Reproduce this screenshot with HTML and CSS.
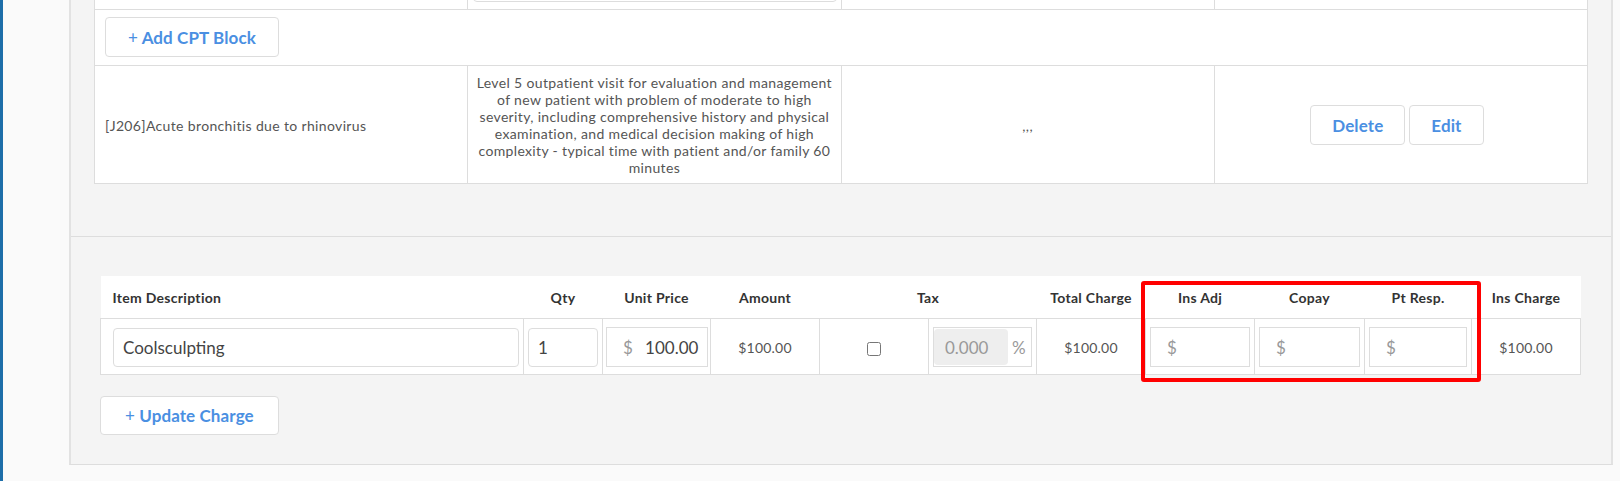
FILE: index.html
```html
<!DOCTYPE html>
<html lang="en">
<head>
    <meta charset="UTF-8">
    <meta name="viewport" content="width=device-width, initial-scale=1.0">
    <title>Superbill Charges</title>
    <link rel="stylesheet" href="styles.css">
</head>
<body>
    <div class="edge"></div>
    <div class="main">
        <div class="panel">
            <div class="section cpt-section">
                <table class="cpt-table">
                    <tr class="stub-row">
                        <td></td>
                        <td><input class="field" type="text"></td>
                        <td></td>
                        <td></td>
                    </tr>
                    <tr>
                        <td colspan="4" class="add-cell">
                            <button class="btn"><span class="plus">+</span> Add CPT Block</button>
                        </td>
                    </tr>
                    <tr class="cpt-row">
                        <td>[J206]Acute bronchitis due to rhinovirus</td>
                        <td class="center">Level 5 outpatient visit for evaluation and management of new patient with problem of moderate to high severity, including comprehensive history and physical examination, and medical decision making of high complexity - typical time with patient and/or family 60 minutes</td>
                        <td class="center">,,,</td>
                        <td class="center action-cell">
                            <div class="actions">
                                <button class="btn">Delete</button>
                                <button class="btn">Edit</button>
                            </div>
                        </td>
                    </tr>
                </table>
            </div>

            <div class="section charge-section">
                <div class="charge-wrap">
                    <table class="charge-table">
                        <colgroup>
                            <col style="width:423px">
                            <col style="width:79px">
                            <col style="width:108px">
                            <col style="width:109px">
                            <col style="width:109px">
                            <col style="width:108px">
                            <col style="width:109px">
                            <col style="width:109px">
                            <col style="width:110px">
                            <col style="width:107px">
                            <col style="width:109px">
                        </colgroup>
                        <thead>
                            <tr>
                                <th class="first">Item Description</th>
                                <th>Qty</th>
                                <th>Unit Price</th>
                                <th>Amount</th>
                                <th colspan="2">Tax</th>
                                <th>Total Charge</th>
                                <th>Ins Adj</th>
                                <th>Copay</th>
                                <th>Pt Resp.</th>
                                <th>Ins Charge</th>
                            </tr>
                        </thead>
                        <tbody>
                            <tr>
                                <td class="first"><input class="field" type="text" value="Coolsculpting"></td>
                                <td><input class="field" type="text" value="1"></td>
                                <td class="tight">
                                    <div class="money">
                                        <span class="cur">$</span>
                                        <input class="money-input" type="text" value="100.00">
                                    </div>
                                </td>
                                <td class="center">$100.00</td>
                                <td class="center"><input class="check" type="checkbox"></td>
                                <td>
                                    <div class="tax">
                                        <input class="tax-input" type="text" value="0.000" disabled>
                                        <span class="pct">%</span>
                                    </div>
                                </td>
                                <td class="center">$100.00</td>
                                <td>
                                    <div class="money">
                                        <span class="cur">$</span>
                                        <input class="money-input" type="text">
                                    </div>
                                </td>
                                <td>
                                    <div class="money">
                                        <span class="cur">$</span>
                                        <input class="money-input" type="text">
                                    </div>
                                </td>
                                <td>
                                    <div class="money">
                                        <span class="cur">$</span>
                                        <input class="money-input" type="text">
                                    </div>
                                </td>
                                <td class="center">$100.00</td>
                            </tr>
                        </tbody>
                    </table>
                    <div class="highlight"></div>
                </div>
                <button class="btn update-btn"><span class="plus">+</span> Update Charge</button>
            </div>
        </div>
    </div>
</body>
</html>
```

FILE: styles.css
```css
html, body {
    height: 100%;
}
body {
    margin: 0;
    display: flex;
    background-color: #fafafa;
    font-family: Lato, "Open Sans", sans-serif;
    color: #555;
    overflow: hidden;
}
.edge {
    flex: none;
    width: 3px;
    background-color: #1d6ea9;
}
.main {
    flex: 1;
    padding-left: 66px;
    padding-right: 8px;
}
.panel {
    margin-top: -60px;
    background-color: #f4f4f4;
    border-left: 2px solid #e2e2e2;
    border-right: 2px solid #e2e2e2;
    border-bottom: 1px solid #dddddd;
}
.section + .section {
    border-top: 1px solid #dddddd;
}

/* CPT block table */
.cpt-section {
    padding: 20px 23px 52px 23px;
}
.cpt-table {
    width: 100%;
    table-layout: fixed;
    border-collapse: collapse;
    background-color: #fff;
    font-size: 14px;
    line-height: 17px;
    letter-spacing: 0.35px;
}
.cpt-table td {
    border: 1px solid #dddddd;
    padding: 8px 10px 7px 10px;
    vertical-align: middle;
}
.cpt-table .stub-row td {
    padding: 5px 4px 7px 5px;
}
.cpt-table .add-cell {
    padding: 7px 10px 8px 10px;
}
.cpt-table td.center {
    text-align: center;
    padding-left: 6px;
    padding-right: 6px;
}
.cpt-table td.action-cell {
    padding-right: 14px;
}
.actions {
    display: flex;
    justify-content: center;
    gap: 4px;
}

.btn {
    height: 40px;
    padding: 0 22px;
    background-color: #fff;
    border: 1px solid #dddddd;
    border-radius: 4px;
    color: #4a8fe2;
    font-family: Lato, "Open Sans", sans-serif;
    font-size: 17px;
    font-weight: bold;
    letter-spacing: 0.1px;
    cursor: pointer;
}
.actions .btn {
    padding: 0 21px;
}
.btn .plus {
    font-weight: normal;
}

/* charge table */
.charge-section {
    padding: 39px 30px 29px 29px;
}
.charge-wrap {
    position: relative;
}
.charge-table {
    width: 1480px;
    table-layout: fixed;
    border-collapse: collapse;
    font-size: 14px;
    letter-spacing: 0.2px;
}
.charge-table th {
    height: 42px;
    padding: 0 4px;
    background-color: #fff;
    border-bottom: 1px solid #dddddd;
    color: #333;
    font-weight: bold;
    letter-spacing: 0.3px;
    text-align: center;
    white-space: nowrap;
}
.charge-table th.first {
    text-align: left;
    padding-left: 12px;
}
.charge-table td {
    padding: 8px 4px 7px 4px;
    border: 1px solid #dddddd;
    background-color: #fff;
    vertical-align: middle;
}
.charge-table td.first {
    padding-left: 12px;
}
.charge-table td.tight {
    padding-left: 3px;
    padding-right: 2px;
}
.charge-table td.center {
    text-align: center;
}

.field {
    display: block;
    width: 100%;
    height: 39px;
    box-sizing: border-box;
    border: 1px solid #dddddd;
    border-radius: 4px;
    padding: 0 9px;
    background-color: #fff;
    color: #444;
    font-family: Lato, "Open Sans", sans-serif;
    font-size: 17px;
}
.stub-row .field {
    height: 36px;
}

.money {
    display: flex;
    align-items: center;
    height: 40px;
    box-sizing: border-box;
    border: 1px solid #dddddd;
    padding-left: 16px;
}
.cur {
    color: #999;
    font-size: 17px;
}
.money-input {
    flex: 1;
    min-width: 0;
    height: 36px;
    border: none;
    padding: 0 0 0 12px;
    background: transparent;
    color: #444;
    font-family: Lato, "Open Sans", sans-serif;
    font-size: 17px;
}

.check {
    width: 14px;
    height: 14px;
    margin: 0;
    vertical-align: middle;
}

.tax {
    display: flex;
    align-items: center;
    height: 40px;
    box-sizing: border-box;
    border: 1px solid #dddddd;
}
.tax-input {
    width: 74px;
    height: 36px;
    box-sizing: border-box;
    border: none;
    border-radius: 4px;
    padding: 0 0 0 11px;
    background-color: #eeeeee;
    color: #999;
    font-family: Lato, "Open Sans", sans-serif;
    font-size: 17px;
}
.pct {
    margin-left: 4px;
    color: #999;
    font-size: 17px;
}

.highlight {
    position: absolute;
    left: 1041px;
    top: 5px;
    width: 340px;
    height: 101px;
    box-sizing: border-box;
    border: 4px solid #ff0000;
    border-radius: 3px;
    pointer-events: none;
}

.update-btn {
    margin-top: 21px;
    height: 39px;
    padding: 0 24px;
}
```
